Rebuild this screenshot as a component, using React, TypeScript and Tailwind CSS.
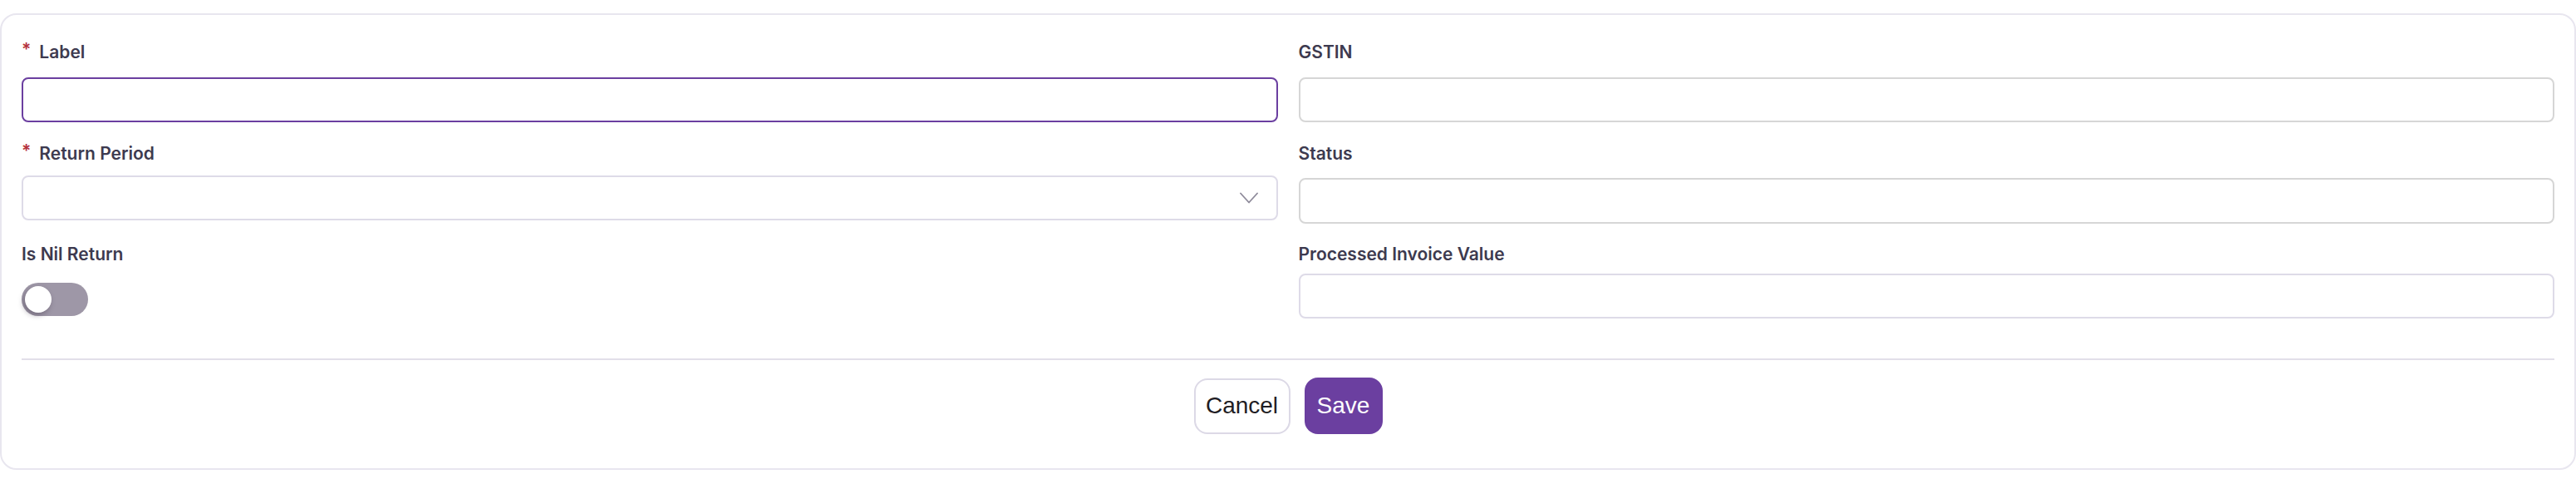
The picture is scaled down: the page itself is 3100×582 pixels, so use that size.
import type { ReactNode } from "react";

const labelCls =
  "flex h-[28px] items-center text-[21px] font-semibold leading-[28px] text-[#3d3a4f]";

function FieldLabel({ children, required = false }: { children: ReactNode; required?: boolean }) {
  return (
    <div className={labelCls}>
      {required && (
        <span className="relative -top-[3px] mr-[10px] text-[21px] font-semibold text-[#b5323c]">*</span>
      )}
      <span>{children}</span>
    </div>
  );
}

function Chevron() {
  return (
    <svg width="22" height="14" viewBox="0 0 22 14" fill="none" className="text-[#8e8a9a]">
      <path d="M1 1.5 L11 12.5 L21 1.5" stroke="currentColor" strokeWidth="1.8" strokeLinecap="round" strokeLinejoin="round" />
    </svg>
  );
}

export default function App() {
  return (
    <div className="min-h-[582px] bg-white py-4 font-['Inter',sans-serif]">
      <div className="rounded-[20px] border-2 border-[#e8e6ef] bg-white px-6 pt-[31px] pb-[41px]">
        <div className="grid grid-cols-2 gap-x-[25px]">
          {/* row 1 */}
          <div>
            <FieldLabel required>Label</FieldLabel>
            <input
              type="text"
              className="mt-4 block h-[54px] w-full rounded-lg border-2 border-[#6b3fa0] bg-white px-3 outline-none"
            />
          </div>
          <div>
            <FieldLabel>GSTIN</FieldLabel>
            <input
              type="text"
              className="mt-4 block h-[54px] w-full rounded-lg border-2 border-[#d6d6d6] bg-white px-3 outline-none"
            />
          </div>

          {/* row 2 */}
          <div className="mt-6">
            <FieldLabel required>Return Period</FieldLabel>
            <button
              type="button"
              className="mt-3 flex h-[54px] w-full items-center justify-end rounded-lg border-2 border-[#dedbe8] bg-white pr-[22px]"
            >
              <Chevron />
            </button>
          </div>
          <div className="mt-6">
            <FieldLabel>Status</FieldLabel>
            <input
              type="text"
              className="mt-[15px] block h-[55px] w-full rounded-lg border-2 border-[#d6d6d6] bg-white px-3 outline-none"
            />
          </div>

          {/* row 3 */}
          <div className="mt-[23px]">
            <FieldLabel>Is Nil Return</FieldLabel>
            <button
              type="button"
              className="mt-5 flex h-10 w-20 items-center rounded-full bg-[#9e97a7] pl-1"
            >
              <span className="h-8 w-8 rounded-full bg-white shadow-[-2px_3px_6px_rgba(40,30,50,0.35)]" />
            </button>
          </div>
          <div className="mt-[23px]">
            <FieldLabel>Processed Invoice Value</FieldLabel>
            <input
              type="text"
              className="mt-[9px] block h-[54px] w-full rounded-lg border-2 border-[#dedbe8] bg-white px-3 outline-none"
            />
          </div>
        </div>

        <div className="mt-[48px] h-[2px] w-full bg-[#e2dfe9]" />

        <div className="mt-[21px] flex items-center justify-center gap-[17px] font-['Liberation_Sans',Arial,sans-serif]">
          <button
            type="button"
            className="flex h-[67px] w-[116px] items-center justify-center rounded-2xl border-2 border-[#dcd9e6] bg-white text-[28px] text-[#1f1d24]"
          >
            Cancel
          </button>
          <button
            type="button"
            className="flex h-[68px] w-[94px] items-center justify-center rounded-2xl bg-[#6b3fa0] text-[28px] text-white"
          >
            Save
          </button>
        </div>
      </div>
    </div>
  );
}
